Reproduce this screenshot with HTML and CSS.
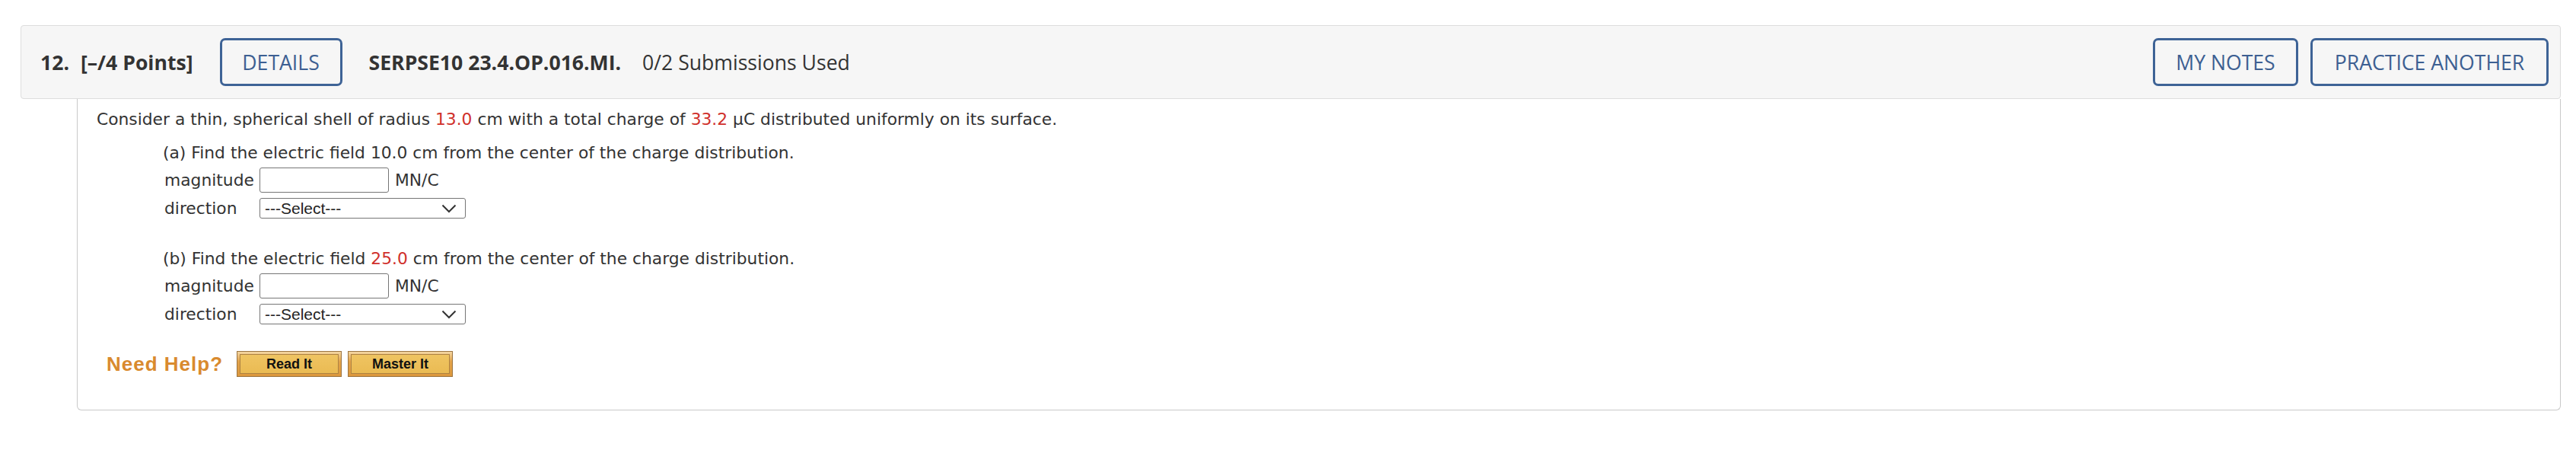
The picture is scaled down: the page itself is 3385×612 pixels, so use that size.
FILE: index.html
```html
<!DOCTYPE html>
<html lang="en">
<head>
<meta charset="utf-8">
<title>Question 12</title>
<link rel="stylesheet" href="styles.css">
</head>
<body>
<div class="question">
  <div class="q-header">
    <span class="q-num">12.</span>
    <span class="q-points">[–/4 Points]</span>
    <button class="btn-outline btn-details">DETAILS</button>
    <span class="q-id">SERPSE10 23.4.OP.016.MI.</span>
    <span class="q-subs">0/2 Submissions Used</span>
    <div class="q-actions">
      <button class="btn-outline btn-notes">MY NOTES</button>
      <button class="btn-outline btn-practice">PRACTICE ANOTHER</button>
    </div>
  </div>
  <div class="q-body">
    <p class="intro">Consider a thin, spherical shell of radius <span class="num">13.0</span> cm with a total charge of <span class="num">33.2</span> µC distributed uniformly on its surface.</p>
    <div class="part">
      <p class="prompt">(a) Find the electric field 10.0 cm from the center of the charge distribution.</p>
      <div class="fields">
        <span class="label">magnitude</span>
        <span class="field"><input class="answer" type="text"><span class="unit">MN/C</span></span>
        <span class="label">direction</span>
        <span class="select-wrap">
          <select class="dir"><option>---Select---</option></select>
          <svg class="chev" viewBox="0 0 20 12" width="20" height="12"><path d="M1.5 1.5 L10 10 L18.5 1.5" fill="none" stroke="#333" stroke-width="2"/></svg>
        </span>
      </div>
    </div>
    <div class="part part-b">
      <p class="prompt">(b) Find the electric field <span class="num">25.0</span> cm from the center of the charge distribution.</p>
      <div class="fields">
        <span class="label">magnitude</span>
        <span class="field"><input class="answer" type="text"><span class="unit">MN/C</span></span>
        <span class="label">direction</span>
        <span class="select-wrap">
          <select class="dir"><option>---Select---</option></select>
          <svg class="chev" viewBox="0 0 20 12" width="20" height="12"><path d="M1.5 1.5 L10 10 L18.5 1.5" fill="none" stroke="#333" stroke-width="2"/></svg>
        </span>
      </div>
    </div>
    <div class="help">
      <span class="help-label">Need Help?</span>
      <button class="help-btn"><span class="help-btn-in">Read It</span></button>
      <button class="help-btn"><span class="help-btn-in">Master It</span></button>
    </div>
  </div>
</div>
</body>
</html>
```
FILE: styles.css
```css
html, body {
  margin: 0;
  padding: 0;
  background: #ffffff;
}
body {
  padding: 33px 20px 0 27px;
  color: #333333;
}
.question {
  display: flex;
  flex-direction: column;
}
.q-header {
  display: flex;
  align-items: center;
  height: 97px;
  box-sizing: border-box;
  padding: 0 15px 0 25px;
  background: #f6f6f6;
  border: 1px solid #dddddd;
  border-radius: 4px;
  font-family: "Open Sans", sans-serif;
  font-size: 26.6px;
  color: #333333;
}
.q-num {
  font-weight: 700;
}
.q-points {
  font-weight: 700;
  margin-left: 15px;
}
.btn-outline {
  font-family: "Open Sans", sans-serif;
  font-size: 26.6px;
  color: #3d5f92;
  background: transparent;
  border: 3px solid #3e6396;
  border-radius: 7px;
  height: 63px;
  padding: 0;
  box-sizing: border-box;
  cursor: pointer;
}
.btn-details {
  margin-left: 35px;
  width: 161px;
}
.q-id {
  font-weight: 700;
  margin-left: 35px;
}
.q-subs {
  margin-left: 28px;
}
.q-actions {
  margin-left: auto;
  display: flex;
  gap: 16px;
}
.btn-notes { width: 191px; }
.btn-practice { width: 313px; }

.q-body {
  margin-left: 74px;
  border: 1px solid #c9c9c9;
  border-top: none;
  border-radius: 0 0 6px 6px;
  padding: 14px 25px 43px 25px;
  font-family: "DejaVu Sans", Verdana, sans-serif;
  font-size: 21.8px;
  line-height: 26px;
  color: #333333;
}
.intro, .prompt {
  margin: 0;
}
.num {
  color: #d0302b;
}
.part {
  margin: 18px 0 0 87px;
}
.part-b {
  margin-top: 40px;
}
.fields {
  display: grid;
  grid-template-columns: 127px auto;
  align-items: center;
  row-gap: 7px;
  margin-top: 6px;
  justify-items: start;
}
.label {
  padding-left: 2px;
}
.field {
  display: flex;
  align-items: center;
  gap: 8px;
}
.answer {
  width: 170px;
  height: 33px;
  box-sizing: border-box;
  border: 1px solid #767676;
  border-radius: 3px;
  padding: 0;
  background: #fff;
}
.select-wrap {
  position: relative;
  display: block;
}
.dir {
  appearance: none;
  -webkit-appearance: none;
  width: 271px;
  height: 27px;
  box-sizing: border-box;
  border: 1px solid #767676;
  border-radius: 3px;
  background: #fff;
  font-family: "Liberation Sans", Arial, sans-serif;
  font-size: 21px;
  line-height: 25px;
  color: #222;
  padding: 0 0 0 6px;
}
.chev {
  position: absolute;
  right: 12px;
  top: 8px;
  pointer-events: none;
}
.help {
  display: flex;
  align-items: center;
  margin: 35px 0 0 13px;
}
.help-label {
  font-family: "Liberation Sans", Arial, sans-serif;
  font-weight: 700;
  font-size: 26px;
  letter-spacing: 1px;
  color: #d98a2e;
  margin-right: 18px;
}
.help-btn {
  width: 138px;
  height: 34px;
  box-sizing: border-box;
  padding: 3px;
  margin-right: 8px;
  border: 1px solid #9c7440;
  background: linear-gradient(#f4d7a3, #e3a349 40%, #dc983d);
  cursor: pointer;
  display: flex;
}
.help-btn-in {
  flex: 1;
  display: flex;
  align-items: center;
  justify-content: center;
  border: 1px solid #ad8242;
  background: linear-gradient(#efc462, #eabb53);
  font-family: "Liberation Sans", Arial, sans-serif;
  font-weight: 700;
  font-size: 18px;
  color: #111;
}
```
